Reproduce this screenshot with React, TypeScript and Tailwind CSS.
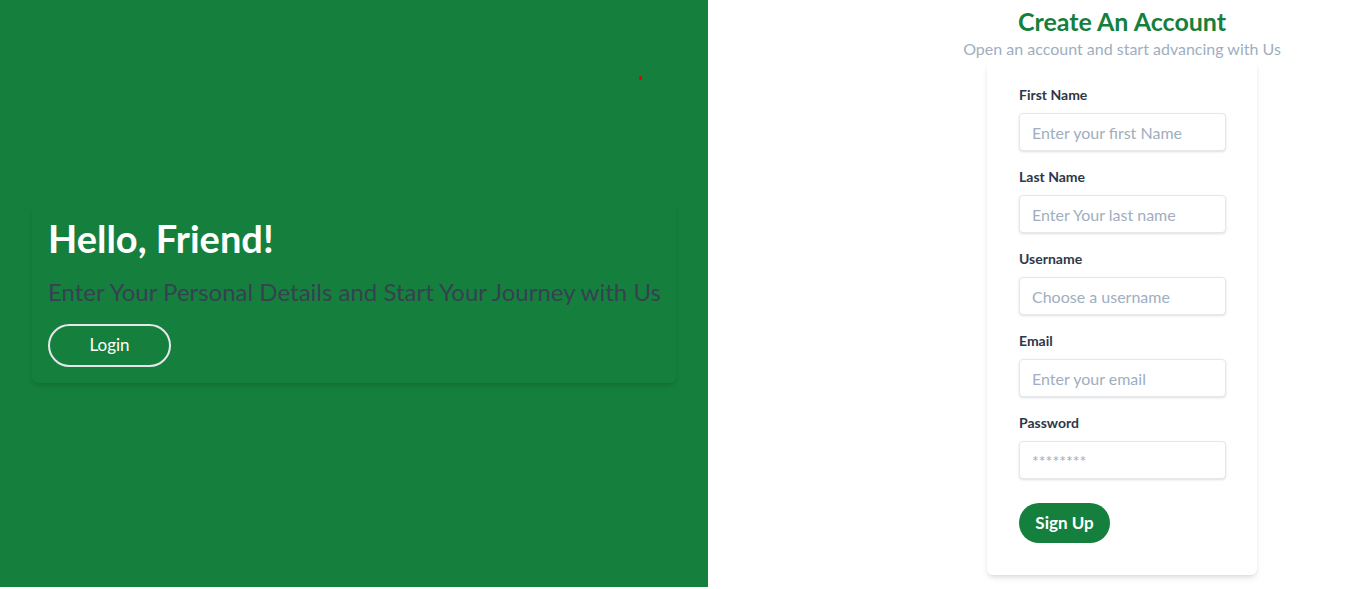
import React from "react";

const fields = [
  { label: "First Name", placeholder: "Enter your first Name", type: "text" },
  { label: "Last Name", placeholder: "Enter Your last name", type: "text" },
  { label: "Username", placeholder: "Choose a username", type: "text" },
  { label: "Email", placeholder: "Enter your email", type: "email" },
  { label: "Password", placeholder: "********", type: "password" },
];

export default function App() {
  return (
    <div className="flex h-[587px] w-[1350px] bg-white font-['Lato','Segoe_UI',sans-serif]">
      <div className="relative flex h-full w-[708px] shrink-0 items-center bg-[#15803d] px-8">
        <div className="absolute left-[639px] top-[76px] h-[4px] w-[3px] rounded-full bg-red-600" />
        <div className="w-full rounded-md bg-[#15803d] px-4 pt-[10px] pb-4 shadow-md">
          <h1 className="text-[38px] font-bold leading-[46px] text-white">Hello, Friend!</h1>
          <p className="mt-[15px] whitespace-nowrap text-[24px] leading-[32px] text-[#374151]">
            Enter Your Personal Details and Start Your Journey with Us
          </p>
          <button className="mt-[16px] h-[43px] w-[123px] rounded-full border-2 border-gray-200 text-[17px] text-white">
            Login
          </button>
        </div>
      </div>
      <div className="flex flex-1 flex-col items-center pl-[186px] pt-[6px]">
        <h2 className="text-[25px] font-bold leading-[30px] text-[#15803d]">Create An Account</h2>
        <p className="mt-[2px] text-[16px] leading-[22px] text-[#a0aec0]">Open an account and start advancing with Us</p>
        <div className="mt-[1px] w-[270px] rounded-md bg-white px-8 pt-[24px] pb-[32px] shadow-md">
          <form className="flex flex-col">
            {fields.map((f) => (
              <div key={f.label} className="mb-[16px] flex flex-col">
                <label className="mb-[8px] text-[14px] font-bold leading-[20px] text-[#2d3748]">{f.label}</label>
                <input
                  type={f.type === "password" ? "text" : f.type}
                  placeholder={f.placeholder}
                  className="h-[38px] w-[207px] rounded border border-gray-200 bg-white px-3 text-[16px] text-gray-700 shadow-sm outline-none placeholder:text-[#a0aec0]"
                />
              </div>
            ))}
            <button
              type="button"
              className="mt-[8px] h-[40px] w-[91px] rounded-[20px] bg-[#15803d] text-[17px] font-bold text-white"
            >
              Sign Up
            </button>
          </form>
        </div>
      </div>
    </div>
  );
}
